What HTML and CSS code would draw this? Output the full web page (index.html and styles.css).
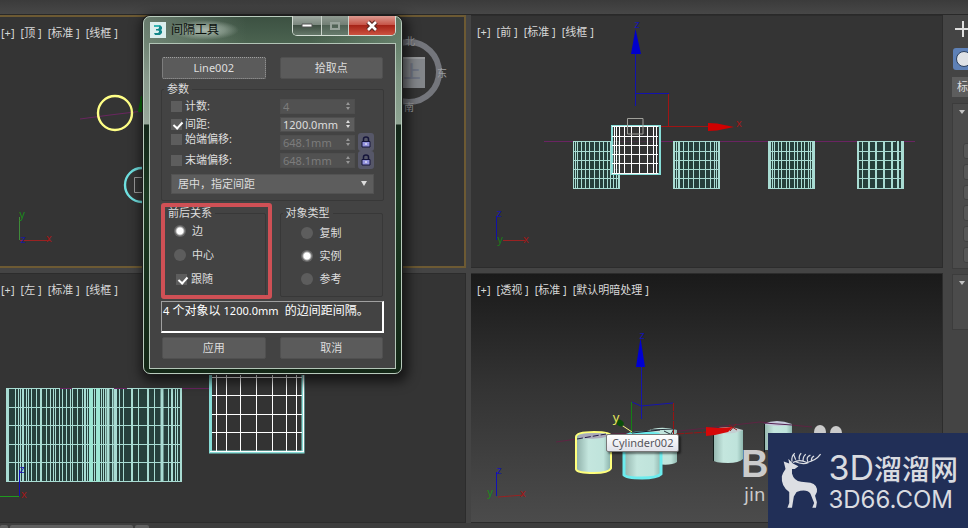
FILE: index.html
```html
<!DOCTYPE html>
<html lang="zh-CN">
<head>
<meta charset="utf-8">
<title>间隔工具</title>
<link rel="stylesheet" href="styles.css">
</head>
<body>
<div class="topbar"></div>
<main class="workspace">
  <div class="viewports">
    <section class="viewport active">
      <svg class="scene" width="466" height="253" viewBox="0 15 466 253">
        <path d="M80 119L110 115L143 111" stroke="#6a2660" fill="none"/>
        <circle cx="115" cy="113" r="17" fill="none" stroke="#ffff86" stroke-width="2.4"/>
        <circle cx="142" cy="185" r="17" fill="none" stroke="#6fe0e0" stroke-width="2.4"/>
        <path d="M138 112L141 96H150V112Z" fill="#0a6e0a"/>
        <path d="M150 177.500H134.500V192.500H150" fill="none" stroke="#9a9a9a"/>
        <circle cx="409" cy="72" r="30" fill="none" stroke="#74767c" stroke-width="6"/>
        <path d="M395 57H425V88H395Z" fill="#83868a"/>
        <path d="M395 57H425V59H395Z" fill="#97999b"/>
        <text x="412" y="78" class="cube-face">上</text>
        <g class="compass"><text x="410" y="45">北</text><text x="442" y="77">东</text><text x="409" y="111">南</text></g>
        <path d="M19.500 217V240" stroke="#3f8a3a"/><path d="M20 240.500H50" stroke="#922"/>
        <g class="axis"><text x="22" y="218" fill="#1b8a1b">y</text><text x="23" y="243" fill="#1818a0">z</text><text x="49" y="242" fill="#a01818">x</text></g>
      </svg>
      <div class="labels"><button>[+]</button><button>[顶 ]</button><button>[标准 ]</button><button>[线框 ]</button></div>
    </section>
    <section class="viewport front">
      <svg class="scene" width="472" height="253" viewBox="471 15 472 253">
        <path d="M544 141.500H915" stroke="#6a2462"/>
        <g fill="#263f3b"><path d="M573 141H619V189H573ZM673 141H720V189H673ZM768 141H815V189H768ZM857 141H904V189H857Z"/></g>
        <g stroke="#a9dcd3" fill="none">
          <path d="M573 141.500H620M573 151.500H620M573 160.500H620M573 169.500H620M573 178.500H620M573 188.500H620"/>
          <path d="M573.500 141V189M575.500 141V189M577.500 141V189M581.500 141V189M585.500 141V189M589.500 141V189M594.500 141V189M599.500 141V189M603.500 141V189M607.500 141V189M610.500 141V189M613.500 141V189M616.500 141V189M618.500 141V189M619.500 141V189"/>
          <path d="M673 141.500H720M673 151.500H720M673 160.500H720M673 169.500H720M673 178.500H720M673 188.500H720"/>
          <path d="M673.500 141V189M674.500 141V189M676.500 141V189M678.500 141V189M679.500 141V189M683.500 141V189M688.500 141V189M693.500 141V189M699.500 141V189M705.500 141V189M710.500 141V189M714.500 141V189M716.500 141V189M718.500 141V189M719.500 141V189"/>
          <path d="M768 141.500H815M768 151.500H815M768 160.500H815M768 169.500H815M768 178.500H815M768 188.500H815"/>
          <path d="M768.500 141V189M769.500 141V189M770.500 141V189M772.500 141V189M774.500 141V189M778.500 141V189M781.500 141V189M786.500 141V189M789.500 141V189M794.500 141V189M797.500 141V189M801.500 141V189M804.500 141V189M808.500 141V189M810.500 141V189M812.500 141V189M813.500 141V189M814.500 141V189"/>
          <path d="M857 141.500H896M857 151.500H904M857 160.500H904M857 169.500H904M857 178.500H904M857 188.500H904"/>
          <path d="M858 141V189M869 141V189M876 141V189M884 141V189M892 141V189M898 141V189M903 141V189" stroke-width="2"/>
          <path d="M862.500 141V189M901.500 141V189"/>
        </g>
        <path d="M611 125H661V175H611Z" fill="#333" fill-opacity=".75"/>
        <path d="M612 126H660V174H612Z" fill="none" stroke="#86ddd7" stroke-width="2"/>
        <path d="M614.500 126V173M616.500 126V173M619.500 126V173M624.500 126V173M631.500 126V173M639.500 126V173M647.500 126V173M653.500 126V173M656.500 126V173M612 126.500H658M612 136.500H658M612 145.500H658M612 154.500H658M612 163.500H658M612 173.500H658" stroke="#fff" fill="none"/>
        <path d="M627.500 118.500H643V134H627.500Z" fill="none" stroke="#a0a09a"/>
        <path d="M635.500 50V106M635 93.500H669" stroke="#1212ae" fill="none"/>
        <path d="M635.500 29L641 54H631Z" fill="#0000cc"/>
        <path d="M668.500 94V126M661 126.500H709" stroke="#a01414" fill="none"/>
        <path d="M708 123L717 123.500L734 127L717 130.500L708 131Z" fill="#d00000"/>
        <path d="M496.500 216V240" stroke="#1111a5"/><path d="M503 240.500H525" stroke="#922"/>
        <g class="axis"><text x="637" y="28" fill="#1414b0">z</text><text x="739" y="127" fill="#a01818">x</text><text x="499" y="217" fill="#1414a8">z</text><text x="500" y="243" fill="#1b7a1b">y</text><text x="526" y="243" fill="#a01818">x</text></g>
      </svg>
      <div class="labels"><button>[+]</button><button>[前 ]</button><button>[标准 ]</button><button>[线框 ]</button></div>
    </section>
    <section class="viewport">
      <svg class="scene" width="466" height="250" viewBox="0 273 466 250">
        <path d="M6 388H182V482H6Z" fill="#27403c"/>
        <path d="M6 388.500H182M6 407.500H182M6 425.500H182M6 444.500H182M6 462.500H182M6 481.500H182M8.500 388V482M15.500 388V482M18.500 388V482M20.500 388V482M26.500 388V482M28.500 388V482M31.500 388V482M36.500 388V482M46.500 388V482M50.500 388V482M53.500 388V482M55.500 388V482M59.500 388V482M62.500 388V482M66.500 388V482M70.500 388V482M72.500 388V482M77.500 388V482M82.500 388V482M87.500 388V482M94.500 388V482M101.500 388V482M103.500 388V482M105.500 388V482M112.500 388V482M116.500 388V482M119.500 388V482M123.500 388V482M138.500 388V482M154.500 388V482M168.500 388V482M175.500 388V482M177.500 388V482" stroke="#a9dcd3" fill="none"/>
        <path d="M7 388V482M23 388V482M41 388V482M85 388V482M132 388V482M148 388V482M172 388V482M181 388V482" stroke="#a9dcd3" stroke-width="2"/>
        <path d="M91 388V482M98 388V482" stroke="#9de6d3" stroke-width="4"/>
        <path d="M108 388V482M115 388V482M162 388V482" stroke="#a9dcd3" stroke-width="3"/>
        <path d="M60 388.500H72M114 388.500H127M182 388.500H209" stroke="#6a2462"/>
        <path d="M210.500 370V452H303V370" fill="#333" stroke="#86ddd7" stroke-width="3"/>
        <path d="M216.500 370V451M226.500 370V451M240.500 370V451M256.500 370V451M272.500 370V451M286.500 370V451M296.500 370V451M212 377.500H302M212 395.500H302M212 414.500H302M212 432.500H302M210 451.500H304M303.500 370V451" stroke="#fff" fill="none"/>
        <path d="M19.500 470V496" stroke="#1111b5"/><path d="M0 496.500H19" stroke="#1f9a1f"/>
        <g class="axis"><text x="22" y="473" fill="#1414b8">z</text><text x="24" y="498" fill="#a01818">x</text></g>
      </svg>
      <div class="labels"><button>[+]</button><button>[左 ]</button><button>[标准 ]</button><button>[线框 ]</button></div>
    </section>
    <section class="viewport front perspective">
      <svg class="scene" width="472" height="250" viewBox="471 273 472 250">
        <defs><linearGradient id="body"><stop offset="0" stop-color="#92b3ac"/><stop offset=".35" stop-color="#c4e6de"/><stop offset=".8" stop-color="#bfe3db"/><stop offset="1" stop-color="#8fb7af"/></linearGradient></defs>
        <path d="M556 442L612 434L680 431L760 422L812 427" stroke="#5e2443" fill="none"/>
        <path d="M577 437Q577 433 594 433Q610 433 610 436V468Q608 472 594 472Q578 472 577 469Z" fill="url(#body)" stroke="#ffff7c" stroke-width="4" stroke-linejoin="round"/>
        <path d="M577 437Q577 433 594 433Q610 433 610 436V468Q608 472 594 472Q578 472 577 469Z" fill="url(#body)"/>
        <path d="M578 437Q580 433 594 433Q608 433 610 436Q594 441 578 437Z" fill="#aaa9b8"/>
        <path d="M577 439L606 434" stroke="#241b46" stroke-dasharray="6 2"/>
        <path d="M647 431Q660 425 677 430V462Q670 467 650 463Z" fill="url(#body)"/>
        <path d="M651 430L674 429L670 436M664 431L674 436" stroke="#263038" fill="none"/>
        <path d="M624 437Q630 431 658 434L661 437V474Q657 478 642 478Q626 478 624 475Z" fill="url(#body)" stroke="#6cecee" stroke-width="3"/>
        <path d="M632 433L660 430" stroke="#202030"/>
        <path d="M713 430H743V459Q739 463 728 463Q714 463 713 460Z" fill="url(#body)"/><path d="M713 430Q726 424 743 430Q728 437 713 430Z" fill="#c4cfd2"/>
        <path d="M764 424H792V450H764Z" fill="url(#body)"/><path d="M764 424Q776 418 792 424Q778 428 764 424Z" fill="#c6c9dc"/><path d="M764 423L792 425" stroke="#522050"/>
        <path d="M764.500 424V452M713.500 432V461" stroke="#101a18"/>
        <path d="M641.500 364V419M632 402L641 406L673 403" stroke="#1515ae" fill="none"/>
        <path d="M640.500 338L645 367H636Z" fill="#0000d2"/>
        <path d="M631.500 402V433" stroke="#148014"/><path d="M673.500 403V434M676 434L708 432" stroke="#961414" stroke-dasharray="8 1" fill="none"/>
        <path d="M620 424L632 432" stroke="#ffff86"/><ellipse cx="620" cy="423" rx="4" ry="3" fill="#0a4e0a" transform="rotate(35 620 423)"/>
        <path d="M706 427L718 428L733 427L728 432L715 435L706 436Z" fill="#d60808"/><path d="M729 425L737 430M736 424L730 431" stroke="#8f1b1b"/>
        <path d="M496.500 472V496" stroke="#1111b5"/><path d="M498 497L524 495" stroke="#922"/>
        <g class="axis"><text x="642" y="339" fill="#1414b0">z</text><text x="616" y="422" fill="#e6e65c" class="axis-active">y</text><text x="499" y="474" fill="#1414b0">z</text><text x="490" y="496" fill="#1b8a1b">y</text><text x="523" y="497" fill="#a01818">x</text></g>
        <g fill="#cbcbcb"><ellipse cx="820" cy="432" rx="6" ry="7"/><ellipse cx="836" cy="433" rx="6" ry="7"/><text x="741" y="477" class="mark-big">B</text><text x="744" y="501" class="mark-small">jin</text></g>
      </svg>
      <div class="labels"><button>[+]</button><button>[透视 ]</button><button>[标准 ]</button><button>[默认明暗处理 ]</button></div>
      <div class="tooltip" role="tooltip">Cylinder002</div>
    </section>
  </div>
  <aside class="panel">
    <button class="create" aria-label="创建"><svg width="16" height="18" viewBox="0 0 16 18"><path d="M0 9H16M8 1V17" stroke="#dedede" stroke-width="2"/></svg></button>
    <button class="geometry" aria-label="几何体"><svg width="20" height="18" viewBox="0 0 20 18"><circle cx="11" cy="9" r="7.500" fill="#dfe2e6" stroke="#2b405e"/></svg></button>
    <button class="kind">标</button>
    <div class="rollout types"><span class="arrow"></span><button aria-label="对象 1"></button><button aria-label="对象 2"></button><button aria-label="对象 3"></button><button aria-label="对象 4"></button><button aria-label="对象 5"></button><button aria-label="对象 6"></button></div>
    <div class="rollout naming"><span class="arrow"></span></div>
  </aside>
</main>
<footer class="timeline"><span class="tick-a"></span><span class="tick-b"></span><span class="tick-c"></span></footer>

<form class="dialog" role="dialog" aria-labelledby="dialog-title">
  <header class="titlebar">
    <svg class="app-icon" width="16" height="16" viewBox="0 0 16 16"><path d="M0 0H16V16H0Z" fill="#dcefee"/><path d="M4 3H10L12 5V7L11 8L12 9V11L10 13H5L4 11H8L9 10V9L8 8.500H6V7H8L9 6V5H4Z" fill="#12878a"/><path d="M4 3H10L9 5H4Z" fill="#35b5b3"/></svg>
    <h1 id="dialog-title">间隔工具</h1>
    <div class="window-buttons">
      <button type="button" class="minimize" aria-label="最小化"><svg width="12" height="6" viewBox="0 0 12 6"><path d="M1 1H11V4H1Z" fill="#fff" stroke="#555"/></svg></button>
      <button type="button" class="maximize" aria-label="最大化"><svg width="12" height="10" viewBox="0 0 12 10"><path d="M2 2H10V8H2Z" fill="none" stroke="#98a39b" stroke-width="2"/></svg></button>
      <button type="button" class="close" aria-label="关闭"><svg width="14" height="12" viewBox="0 0 14 12"><path d="M3 2L11 10M11 2L3 10" stroke="#5d2823" stroke-width="5"/><path d="M3 2L11 10M11 2L3 10" stroke="#fff" stroke-width="2.600"/></svg></button>
    </div>
  </header>
  <div class="dialog-body">
    <div class="pair"><button type="button" class="push focused">Line002</button><button type="button" class="push">拾取点</button></div>
    <fieldset class="params">
      <legend>参数</legend>
      <div class="row"><label><input type="checkbox">计数:</label><span class="spin off"><input type="text" value="4" aria-label="计数" disabled><i></i></span></div>
      <div class="row"><label><input type="checkbox" checked>间距:</label><span class="spin"><input type="text" value="1200.0mm" aria-label="间距"><i></i></span></div>
      <div class="row raised"><label><input type="checkbox">始端偏移:</label><span class="spin off"><input type="text" value="648.1mm" aria-label="始端偏移" disabled><i></i></span><button type="button" class="lock" aria-label="锁定始端"><svg width="10" height="12" viewBox="0 0 10 12"><path d="M2.500 6V3Q2.500 1 5 1Q7.500 1 7.500 3V6" fill="none" stroke="#15153a" stroke-width="1.500"/><path d="M1 5.500H9V11H1Z" fill="#9292dc" stroke="#15153a"/><path d="M5 7V9" stroke="#fff"/></svg></button></div>
      <div class="row"><label><input type="checkbox">末端偏移:</label><span class="spin off"><input type="text" value="648.1mm" aria-label="末端偏移" disabled><i></i></span><button type="button" class="lock" aria-label="锁定末端"><svg width="10" height="12" viewBox="0 0 10 12"><path d="M2.500 6V3Q2.500 1 5 1Q7.500 1 7.500 3V6" fill="none" stroke="#15153a" stroke-width="1.500"/><path d="M1 5.500H9V11H1Z" fill="#9292dc" stroke="#15153a"/><path d="M5 7V9" stroke="#fff"/></svg></button></div>
      <div class="drop"><select aria-label="分布方式"><option>居中，指定间距</option></select></div>
    </fieldset>
    <div class="pair groups">
      <fieldset class="context">
        <legend>前后关系</legend>
        <label><input type="radio" name="context" checked>边</label>
        <label><input type="radio" name="context">中心</label>
        <label class="follow"><input type="checkbox" checked>跟随</label>
        <span class="highlight"></span>
      </fieldset>
      <fieldset class="object-type">
        <legend>对象类型</legend>
        <label><input type="radio" name="object">复制</label>
        <label><input type="radio" name="object" checked>实例</label>
        <label><input type="radio" name="object">参考</label>
      </fieldset>
    </div>
    <output class="message"><small>4</small> 个对象以 <small>1200.0mm</small>&nbsp; 的边间距间隔。</output>
    <div class="pair"><button type="button" class="push">应用</button><button type="button" class="push">取消</button></div>
  </div>
</form>

<div class="brand">
  <svg width="46" height="60" viewBox="0 0 46 60"><path d="M4 10L10 12L9 7L14 12L20 15L16 18L13 18L13 23Q15 31 23 32L33 33Q41 35 40 43L38 47L40 54L39 60H35L37 55L33 45Q29 39 18 43L15 48L13 60H8L10 55L10 43Q1 37 2 26Q3 22 6 18Z" fill="#dcdee3"/><path d="M13 10Q12 4 16 1M14 11Q21 7 29 11Q39 9 44 2M17 8L15 3M21 8Q20 4 23 1M25 9Q25 4 28 2M30 10Q28 5 33 3M34 9Q34 5 37 4M16 10Q25 14 31 11" fill="none" stroke="#dcdee3" stroke-width="1.300"/></svg>
  <div class="brand-text"><div class="brand-name"><span>3D</span>溜溜网</div><div class="brand-url">3D66.COM</div></div>
</div>
</body>
</html>
```
FILE: styles.css
```css
* { box-sizing: border-box; }
body {
  margin: 0;
  min-height: 100vh;
  display: flex;
  flex-direction: column;
  position: relative;
  overflow: hidden;
  background: #444;
  color: #dedede;
  font: 11px/14px "Noto Sans", "Noto Sans CJK SC", sans-serif;
}
button, input, select { font: inherit; color: inherit; margin: 0; padding: 0; border: 0; }
button { background: none; }

.topbar { height: 15px; background: linear-gradient(#3b3b3b, #474747); border-bottom: 1px solid #292929; }
.workspace { flex: 1; display: flex; gap: 8px; }
.viewports { flex: 1; display: grid; grid-template-columns: 466fr 472fr; grid-template-rows: 253fr 250fr; gap: 5px; }
.viewport { position: relative; overflow: hidden; background: #343434; border: 1px solid #2c2c2c; border-left: 0; }
.viewport.active { border: 2px solid #6d5a33; border-left: 0; }
.perspective { background: linear-gradient(#1a1a1a, #333 45%, #4b4b4b); }
.scene { position: absolute; left: 0; top: -1px; }
.active .scene { top: -2px; }
.labels { position: relative; display: flex; gap: 6px; padding: 8px 0 0 1px; font-size: 11px; line-height: 16px; color: #d8d8d8; }
.front .labels { padding-left: 6px; }
.axis { font: 11px "Noto Sans", sans-serif; text-anchor: middle; }
.axis-active { font-size: 13px; }
.compass { font: 10px "Noto Sans CJK SC", sans-serif; fill: #9b9da0; text-anchor: middle; }
.cube-face { font: bold 17px "Noto Sans CJK SC", sans-serif; fill: #6f7482; text-anchor: middle; }
.mark-big { font: bold 38px "Liberation Sans", sans-serif; }
.mark-small { font: 18px "DejaVu Sans", sans-serif; }
.tooltip {
  position: absolute; left: 135px; top: 160px;
  padding: 0 5px; height: 18px;
  background: linear-gradient(#fff, #e1e2ea); color: #55555c;
  border: 1px solid #777; border-radius: 2px;
  font-size: 11px; line-height: 16px; box-shadow: 2px 2px 2px #0007;
}

.panel { width: 17px; overflow: hidden; display: flex; flex-direction: column; align-items: flex-start; padding-top: 5px; }
.create { height: 18px; margin: 0 0 10px 4px; }
.geometry { background: #5e81b7; border-radius: 3px; height: 22px; padding: 2px 0; margin: 0 0 7px 2px; }
.panel svg { display: block; }
.kind { background: #5d5d5d; width: 40px; height: 20px; margin: 0 0 6px 1px; padding-left: 5px; text-align: left; }
.rollout { width: 40px; margin-left: 1px; background: #4b4b4b; border: 1px solid #3c3c3c; display: flex; flex-direction: column; padding: 6px 0 0 6px; }
.types { height: 166px; margin-bottom: 5px; }
.naming { height: 56px; }
.arrow { border: 3px solid transparent; border-top: 4px solid #c2c2c2; border-bottom: 0; width: 0; margin-bottom: 29px; }
.types button { width: 30px; height: 16px; margin: 0 0 5px 4px; background: #575757; border: 1px solid #414141; border-radius: 3px; }
.timeline { height: 5px; padding-top: 2px; display: flex; gap: 2px; background: #3d3d3d; }
.timeline span { background: #606060; border-radius: 2px 2px 0 0; }
.tick-a { width: 8px; }
.tick-b { width: 123px; }
.tick-c { width: 14px; }

.dialog {
  position: absolute; left: 143px; top: 16px; width: 259px;
  padding: 0 5px 4px; margin: 0;
  border: 1px solid #b9cbbd; border-radius: 7px;
  background:
    linear-gradient(90deg, #a9b8ac66, #0000 40% 65%, #8fae9566) top / 100% 107px no-repeat,
    linear-gradient(#3c5142 0, #4b6350 26px, #728576 60px, #8d9d90 107px, #14271a 108px, #1d3a23 50%, #142817);
  box-shadow: 0 0 0 1px #1c1c1c, 2px 4px 12px 4px #0009;
}
.titlebar { display: flex; align-items: flex-start; height: 26px; }
.app-icon { margin: 5px 4px 0 1px; }
.titlebar h1 { margin: 3px 0 0; font-size: 12px; line-height: 20px; font-weight: 400; color: #0b0f0c; padding: 0 20px 0 1px; background: radial-gradient(closest-side, #a9b7ac, #94a598aa 60%, #0000); }
.window-buttons { display: flex; margin: -1px 0 0 auto; border: 1px solid #d4ddd5; border-top: 0; border-radius: 0 0 5px 5px; overflow: hidden; }
.window-buttons button { height: 19px; display: flex; align-items: center; justify-content: center; border-right: 1px solid #cbd4cc; background: linear-gradient(#a0aaa2, #7c887f 45%, #3c4c40 46%, #66786a); }
.window-buttons .minimize { width: 29px; }
.window-buttons .maximize { width: 27px; background: linear-gradient(#8f9a91, #738076 45%, #4d5f52 46%, #687b6d); }
.window-buttons .close { width: 46px; border-right: 0; background: linear-gradient(#dc9a90, #c7564a 45%, #a32015 46%, #cc5240); }
.dialog-body { border: 1px solid #b3c5b7; background: #434343; padding: 13px 11px 9px; }
.pair { display: grid; grid-template-columns: 1fr 1fr; gap: 14px; padding: 0 1px; }
.push { height: 22px; background: #5b5b5b; border: 1px solid #505050; border-radius: 2px; }
.focused { border: 1px dotted #a0a0a0; }
fieldset { margin: 0; min-width: 0; border: 1px solid #383838; border-radius: 2px; }
legend { padding: 0 3px; margin-left: 2px; }
.params { margin-top: 3px; padding: 1px 9px 6px; }
.params legend { margin-left: -7px; }
.row { display: flex; align-items: center; height: 18px; }
.row label { width: 109px; display: flex; align-items: center; gap: 3px; }
.raised label { align-self: flex-start; line-height: 12px; }
.spin { width: 75px; height: 15px; display: flex; align-items: center; background: #5d5d5d; border: 1px solid #4e4e4e; }
.spin input { flex: 1; min-width: 0; background: none; padding-left: 2px; line-height: 13px; }
.spin i { position: relative; width: 5px; height: 8px; margin-right: 3px; }
.spin i::before, .spin i::after { content: ""; position: absolute; left: 0; border: 2px solid transparent; }
.spin i::before { top: 0; border-top: 0; border-bottom: 3px solid #ddd; }
.spin i::after { bottom: 0; border-bottom: 0; border-top: 3px solid #ddd; }
.off { background: #515151; color: #7c7c7c; }
.off i { opacity: .5; }
.lock { width: 16px; height: 18px; margin-left: 3px; display: flex; align-items: center; justify-content: center; background: #565768; border-radius: 3px; }
.drop { position: relative; margin-top: 5px; height: 20px; }
.drop select { appearance: none; width: 100%; height: 20px; padding-left: 6px; background: #5d5d5d; border: 1px solid #525252; display: block; }
.drop::after { content: ""; position: absolute; right: 7px; top: 7px; border: 3px solid transparent; border-top: 5px solid #ddd; border-bottom: 0; pointer-events: none; }
input[type="checkbox"], input[type="radio"] { appearance: none; flex: none; width: 11px; height: 11px; background: #5d5d5d; position: relative; }
input[type="checkbox"]:checked::after { content: ""; position: absolute; left: 4px; top: 1px; width: 4px; height: 7px; border: solid #fff; border-width: 0 2px 2px 0; transform: rotate(42deg); }
input[type="radio"] { border-radius: 50%; width: 12px; height: 12px; }
input[type="radio"]:checked { background: radial-gradient(#fff 3px, #666 5px); }
.groups { margin-top: 5px; }
.context, .object-type { height: 91px; padding: 0; position: relative; display: flex; flex-direction: column; gap: 9px; }
.context label, .object-type label { display: flex; align-items: center; gap: 6px; margin-left: 11px; }
.object-type label { margin-left: 20px; gap: 7px; }
.groups fieldset { padding-top: 6px; }
.groups .context { padding-top: 4px; gap: 10px; }
.context .follow { margin-left: 13px; gap: 4px; }
.highlight { position: absolute; left: -2px; right: -7px; top: -17px; bottom: -3px; border: 4px solid #cf5055; border-radius: 3px; pointer-events: none; }
.groups legend { position: relative; z-index: 1; }
.message { display: block; height: 32px; margin: 4px 0; padding: 1px; border: 1px solid #a0a0a0; border-right: 2px solid #fff; border-bottom: 2px solid #fff; font-size: 12px; line-height: 16px; color: #fff; white-space: nowrap; }
.message small { font-size: 11px; }

.brand { position: absolute; right: 0; bottom: 0; width: 200px; height: 95px; padding: 17px 10px 0 12px; display: flex; gap: 6px; background: #212f57; color: #d9dbe0; }
.brand-text { flex: 1; white-space: nowrap; }
.brand-name { display: flex; align-items: center; height: 36px; font: 500 28px/36px "Noto Sans CJK SC", sans-serif; }
.brand-name span { font: 34px/36px Inter, sans-serif; }
.brand-url { margin-top: 2px; font: 24px/24px Inter, sans-serif; }
```
